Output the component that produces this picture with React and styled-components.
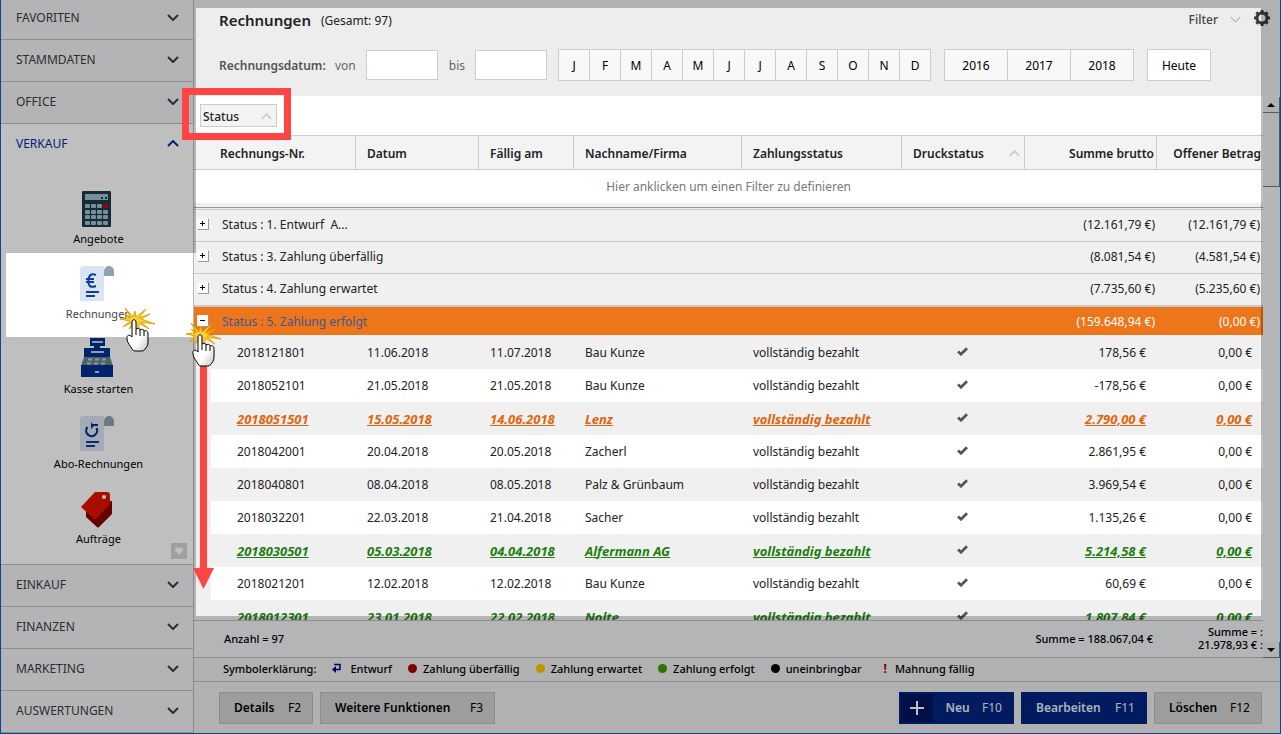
import React from "react";
import styled, { createGlobalStyle, css } from "styled-components";
import { FaHeart } from "react-icons/fa";

const GlobalStyle = createGlobalStyle`
  * {
    box-sizing: border-box;
  }
  body {
    margin: 0;
    overflow: hidden;
    font-family: "Noto Sans", "Open Sans", sans-serif;
    font-size: 12px;
    color: #222;
  }
  button, input {
    font: inherit;
    color: inherit;
  }
`;

const Window = styled.div`
  position: relative;
  display: flex;
  height: 100vh;
  overflow: hidden;
  border: 1px solid #0846a0;
  border-top: 0;
  background: #ececec;
`;

/* ---------- sidebar ---------- */

const Sidebar = styled.nav`
  display: flex;
  flex-direction: column;
  flex: 0 0 193px;
  margin-top: -2px;
  border-right: 1px solid #b8b8b8;
  background: #f0f1f3;
`;

const SectionButton = styled.button`
  display: flex;
  align-items: center;
  justify-content: space-between;
  flex: 0 0 42px;
  height: 42px;
  padding: 0 14px 2px 15px;
  border: 0;
  border-bottom: 1px solid ${(props) => (props.$open ? "transparent" : "#bcbcbc")};
  background: none;
  color: ${(props) => (props.$open ? "#002d9c" : "#3c3c3c")};
`;

const OpenSection = styled.section`
  position: relative;
  display: flex;
  flex-direction: column;
  flex: 1;
  background: #fff;
  border-bottom: 1px solid #bcbcbc;
`;

const ItemList = styled.div`
  padding-top: 12px;
`;

const Item = styled.a`
  display: flex;
  flex-direction: column;
  align-items: center;
  height: 75px;
  padding: 12px 0 0 3px;
  font-size: 11px;
  line-height: 22px;
  color: ${(props) => (props.$active ? "#444" : "#000")};
  text-decoration: none;
  svg {
    flex: none;
    margin-right: 4px;
    overflow: visible;
  }
`;

const FavButton = styled.button`
  position: absolute;
  right: 6px;
  bottom: 5px;
  display: flex;
  align-items: center;
  justify-content: center;
  width: 16px;
  height: 16px;
  padding: 0;
  border: 0;
  background: #d6d6d6;
  color: #fff;
  font-size: 8px;
`;

/* ---------- header ---------- */

const Main = styled.main`
  display: flex;
  flex-direction: column;
  flex: 1;
  min-width: 0;
`;

const Header = styled.header`
  flex: 0 0 96px;
  padding: 0 10px 0 25px;
  background: #ededed;
`;

const TitleRow = styled.div`
  display: flex;
  align-items: center;
  gap: 10px;
  height: 40px;
`;

const Title = styled.h1`
  margin: 0;
  font-size: 15px;
  font-weight: 600;
`;

const FilterButton = styled.button`
  display: flex;
  align-items: center;
  gap: 12px;
  margin-left: auto;
  padding: 0 0 2px;
  border: 0;
  background: none;
  color: #444;
  font-weight: 500;
`;

const GearButton = styled.button`
  display: flex;
  padding: 0;
  margin: 0 0 4px 3px;
  border: 0;
  background: none;
`;

const DateRow = styled.div`
  display: flex;
  align-items: center;
  height: 50px;
  color: #666;
`;

const DateTitle = styled.span`
  width: 116px;
  font-weight: 600;
  color: #555;
`;

const DateField = styled.label`
  display: flex;
  align-items: center;
  gap: 10px;
  margin-right: 11px;
`;

const DateInput = styled.input`
  width: 72px;
  height: 30px;
  border: 1px solid #ccc;
  background: #fff;
`;

const ButtonGroup = styled.div`
  display: flex;
  margin-right: 13px;
  border: 1px solid #ccc;
  background: #f8f8f8;
`;

const PeriodButton = styled.button`
  width: ${(props) => props.$width}px;
  height: 30px;
  padding: 0;
  border: 0;
  background: ${(props) => (props.$white ? "#fff" : "none")};
  color: #000;
  & + & {
    border-left: 1px solid #ccc;
  }
`;

/* ---------- grid ---------- */

const GridArea = styled.div`
  display: flex;
  flex: 1;
  min-height: 0;
`;

const GridColumn = styled.div`
  display: flex;
  flex-direction: column;
  flex: 1;
  min-width: 0;
`;

const GroupPanel = styled.div`
  flex: 0 0 39px;
  padding: 8px 0 0 6px;
  background: #fff;
`;

const GroupChip = styled.button`
  display: flex;
  align-items: center;
  justify-content: space-between;
  width: 77px;
  height: 23px;
  padding: 2px 4px 0 2px;
  border: 1px solid #ccc;
  background: #f3f3f3;
  font-weight: 500;
`;

const TableWrap = styled.div`
  flex: 1;
  min-height: 0;
  overflow: hidden;
  background: #f0f0f0;
`;

const Table = styled.table`
  width: 100%;
  table-layout: fixed;
  border-collapse: separate;
  border-spacing: 0;
  white-space: nowrap;
`;

const Th = styled.th`
  height: 35px;
  padding: 2px ${(props) => (props.$right ? 2 : 4)}px 0 ${(props) => (props.$first ? 26 : 11)}px;
  border: 1px solid #ccc;
  border-left: 0;
  background: #f3f3f3;
  font-weight: 600;
  text-align: ${(props) => (props.$right ? "right" : "left")};
  &:last-child {
    border-right: 0;
  }
`;

const ThInner = styled.span`
  display: flex;
  align-items: center;
  justify-content: space-between;
`;

const FilterCell = styled.td`
  height: 33px;
  padding: 0;
  background: #fff;
  color: #777;
  text-align: center;
`;

const DividerCell = styled.td`
  height: 7px;
  padding: 0;
  border-bottom: 1px solid #c8c8c8;
  background: linear-gradient(#eee 4px, #999 4px, #999 5px, #f0f0f0 5px);
`;

const GroupRow = styled.tr`
  td {
    height: 32px;
    padding: 0 3px 2px 0;
    border-bottom: 1px solid #c8c8c8;
    background: #f0f0f0;
    text-align: right;
  }
  td:first-child {
    padding-left: 3px;
    text-align: left;
  }
  td:nth-child(2) {
    padding-right: 2px;
  }
  ${(props) =>
    props.$open &&
    css`
      color: #fff;
      td {
        height: 30px;
        padding-bottom: 0;
        border-top: 1px solid #c8c8c8;
        border-bottom-color: #f0f0f0;
        background: #ed751a;
      }
      td:first-child {
        color: #40599c;
      }
    `}
`;

const GroupLabel = styled.span`
  display: flex;
  align-items: center;
  gap: 14px;
  white-space: pre;
`;

const Toggle = styled.button`
  display: flex;
  align-items: center;
  justify-content: center;
  width: 11px;
  height: 11px;
  padding: 0;
  margin-bottom: 2px;
  border: 0;
  background: #fafafa;
  box-shadow: 1px 1px 0 #999;
  svg {
    display: block;
  }
`;

const rowColors = { overdue: "#e0650f", done: "#1f7d12" };

const DataRow = styled.tr`
  td {
    height: 33px;
    padding: 0 11px;
    background: ${(props) => (props.$even ? "#fff" : "#f0f0f0")};
    text-align: left;
    ${(props) =>
      props.$tone &&
      css`
        color: ${rowColors[props.$tone]};
        font-size: 13px;
        line-height: 16px;
        font-weight: 700;
        font-style: italic;
        text-decoration: underline;
      `}
  }
  td:first-child {
    padding-left: 43px;
    background: linear-gradient(90deg, #f0f0f0 17px, ${(props) => (props.$even ? "#fff" : "#f0f0f0")} 17px);
  }
  td:nth-child(6) {
    padding: 0 2px 2px 0;
    text-align: center;
  }
  td:nth-child(n + 7) {
    text-align: right;
  }
  svg {
    display: block;
    margin: 0 auto;
  }
`;

const Summary = styled.div`
  display: flex;
  align-items: center;
  flex: 0 0 38px;
  padding: 0 0 2px 30px;
  border-top: 1px solid #bcbcbc;
  border-bottom: 1px solid #bcbcbc;
  background: #f1f2f5;
  font-size: 11px;
  font-weight: 500;
  line-height: 13px;
  color: #000;
  white-space: nowrap;
`;

const SummaryTotal = styled.span`
  margin-left: auto;
`;

const SummaryOpen = styled.span`
  width: 110px;
  text-align: right;
`;

const Scrollbar = styled.div`
  display: flex;
  flex-direction: column;
  flex: 0 0 17px;
  padding-top: 1px;
  background: repeating-conic-gradient(#e8e8e8 0 25%, #fff 0 50%) 0 0 / 2px 2px;
`;

const ScrollButton = styled.button`
  display: flex;
  align-items: center;
  justify-content: center;
  flex: 0 0 16px;
  padding: 0;
  border: 0;
  border-right: 1px solid #777;
  border-bottom: 1px solid #777;
  background: #ececec;
  &:last-child {
    margin-top: auto;
  }
`;

const ScrollThumb = styled.div`
  flex: 0 0 74px;
  border-right: 1px solid #777;
  border-bottom: 1px solid #777;
  background: #ececec;
`;

/* ---------- legend and actions ---------- */

const Legend = styled.div`
  display: flex;
  align-items: center;
  flex: 0 0 24px;
  gap: 16px;
  padding: 0 0 2px 29px;
  border-bottom: 1px solid #bcbcbc;
  font-size: 11px;
  font-weight: 500;
  color: #000;
  white-space: nowrap;
`;

const LegendItem = styled.span`
  display: flex;
  align-items: center;
  gap: ${(props) => props.$gap || 6}px;
`;

const Dot = styled.i`
  width: 9px;
  height: 9px;
  border-radius: 50%;
  background: ${(props) => props.$color};
`;

const Mark = styled.b`
  margin-left: 6px;
  color: #a80000;
  font-size: 12px;
`;

const Actions = styled.footer`
  display: flex;
  align-items: center;
  flex: 0 0 51px;
  gap: 7px;
  padding: 0 18px 0 25px;
`;

const Spacer = styled.div`
  flex: 1;
`;

const ActionButton = styled.button`
  display: flex;
  align-items: center;
  justify-content: space-between;
  width: ${(props) => props.$width}px;
  height: 32px;
  padding: 0 11px 0 14px;
  border: 1px solid ${(props) => (props.$primary ? "#00247f" : "#bdbdbd")};
  background: ${(props) => (props.$primary ? "#00247f" : "#d2d2d2")};
  color: ${(props) => (props.$primary ? "#e6eef8" : "#000")};
  white-space: nowrap;
  b {
    font-weight: 600;
  }
`;

const PlusBox = styled.span`
  display: flex;
  align-items: center;
  justify-content: center;
  width: 32px;
  height: 28px;
  margin-left: -13px;
  background: #00145f;
`;

/* ---------- tutorial layer ---------- */

// everything is darkened except the active menu item and the invoice list
const Shade = styled.div`
  position: absolute;
  inset: 0;
  background: rgba(0, 0, 0, 0.25);
  pointer-events: none;
  clip-path: polygon(
    evenodd,
    0 0, 100% 0, 100% 100%, 0 100%, 0 0,
    5px 253px, 195px 253px, 195px 8px,
    calc(100% - 19px) 8px, calc(100% - 19px) calc(100% - 117px),
    195px calc(100% - 117px), 195px 337px, 5px 337px, 5px 253px
  );
`;

const RedFrame = styled.div`
  position: absolute;
  left: 181px;
  top: 88px;
  width: 109px;
  height: 52px;
  border: 7px solid #ff4444;
  pointer-events: none;
`;

const Overlay = styled.svg`
  position: absolute;
  left: ${(props) => props.$x}px;
  top: ${(props) => props.$y}px;
  pointer-events: none;
`;

/* ---------- drawings ---------- */

const Chevron = ({ up, size = 11, color = "currentColor", width = 1 }) => (
  <svg width={size} height="7" viewBox="0 0 12 7" fill="none" stroke={color} strokeWidth={width}>
    <polyline points={up ? "1,6 6,1 11,6" : "1,1 6,6 11,1"} />
  </svg>
);

const Check = () => (
  <svg width="11" height="9" viewBox="0 0 11 9">
    <path d="M1 4.500L4 7.200 10 1.200" fill="none" stroke="#555" strokeWidth="2.800" />
  </svg>
);

const Calculator = () => (
  <svg width="38" height="38" viewBox="0 0 38 38">
    <rect x="4" y="1" width="29" height="36" rx="1" fill="#1c3a48" />
    <rect x="7" y="4" width="23" height="6" fill="#9cc0cf" />
    <path d="M23 8h2M27 8h2" stroke="#1c3a48" strokeWidth="2" />
    {[14, 20, 25, 31].map((y) =>
      [7, 13, 19, 25].map((x) => (
        <rect key={`${x}-${y}`} x={x} y={y} width="5" height="4" rx="1" fill={x === 25 && y === 14 ? "#d0000f" : "#9cc0cf"} />
      ))
    )}
  </svg>
);

const Paper = ({ children }) => (
  <svg width="38" height="38" viewBox="0 0 38 38">
    <path d="M26 11V6a5 5 0 0 1 10 0v5z" fill="#8da4ae" />
    <path d="M5 1h21v35H2V5q0-4 3-4z" fill="#dbe4f3" />
    <path d="M8 27h13M8 31h9" stroke="#0a3f9f" strokeWidth="2" />
    {children}
  </svg>
);

const Register = () => (
  <svg width="38" height="38" viewBox="0 4 38 38">
    <path d="M12 2h15v8h-5v3h-6v-3h-4z" fill="#00308c" />
    <path d="M14 5h11v2H14z" fill="#b8c6dc" />
    <path d="M6 12h26v9H6z" fill="#00308c" />
    <path d="M13 16h13" stroke="#c4d0e4" strokeWidth="2" />
    <path d="M6 21h26l3 9H3z" fill="#68808c" />
    <path d="M10 23.500h18M9 27.500h20" stroke="#c0ccd0" strokeWidth="2" strokeDasharray="4 3" />
    <path d="M3 29h32v12H3z" fill="#00308c" />
    <path d="M17 36h4" stroke="#c4d0e4" strokeWidth="2" />
  </svg>
);

const Tag = () => (
  <svg width="38" height="38" viewBox="0 0 38 38">
    <path d="M8 22l15-10 11-1v13L21 37q-1 1-2 0L8 27z" fill="#880000" />
    <path d="M17 2h12q3 0 3 3v9L18 29q-1 1-2 0L3 17z" fill="#e01200" />
    <circle cx="26" cy="7" r="2" fill="#fff" />
  </svg>
);

const Gear = () => (
  <svg width="16" height="16" viewBox="0 0 16 16">
    <circle cx="8" cy="8" r="5" fill="none" stroke="#3a3a3a" strokeWidth="3" />
    {[0, 45, 90, 135].map((deg) => (
      <path key={deg} d="M8 0v3M8 13v3" stroke="#3a3a3a" strokeWidth="3" transform={`rotate(${deg} 8 8)`} />
    ))}
  </svg>
);

const ReturnArrow = () => (
  <svg width="10" height="11" viewBox="0 0 10 11">
    <path d="M2 1.500h6v5H4" fill="none" stroke="#00007c" strokeWidth="1.500" />
    <path d="M0 6.500L4 3v7z" fill="#00007c" />
  </svg>
);

const ClickHand = ({ x, y }) => (
  <Overlay $x={x} $y={y} width="38" height="46" viewBox="0 0 38 46">
    <defs>
      <linearGradient id="palm" x1="0" y1="0" x2="1" y2="1">
        <stop offset="0.6" stopColor="#fff" />
        <stop offset="1" stopColor="#c4c4c4" />
      </linearGradient>
    </defs>
    <path
      d="M13 12L7 2l8 9 2-6 1 6 10-8-7 9 11-4-9 5 14 5-14-2 8 7-10-6 0 8-4-7-6 5 4-7-10 5 7-6-10-2 9-1-4-4z"
      fill="#fbd040"
      stroke="#e2a400"
      strokeWidth="1"
    />
    <path
      d="M14 30V16c0-3 4-3 4 0v7c1-1 4-1 4 1 1-1 4-1 4 1 2-1 4 0 4 3v8c0 4-2 6-3 7q-1 2-3 2h-7q-2 0-3-2c-1-3-5-6-5-10-1-4 3-5 5-2z"
      fill="url(#palm)"
      stroke="#000"
      strokeWidth="1"
    />
    <path d="M18 23v6M22 24v6M26 25v5" stroke="#000" fill="none" />
  </Overlay>
);

/* ---------- data ---------- */

const topSections = ["FAVORITEN", "STAMMDATEN", "OFFICE"];
const bottomSections = ["EINKAUF", "FINANZEN", "MARKETING", "AUSWERTUNGEN"];

const items = [
  { label: "Angebote", icon: <Calculator /> },
  {
    label: "Rechnungen",
    active: true,
    icon: (
      <Paper>
        <path d="M18 10q-7-3-7.500 5.500T18 21M8 14h8M8 17h8" fill="none" stroke="#0a3f9f" strokeWidth="2" />
      </Paper>
    ),
  },
  { label: "Kasse starten", icon: <Register /> },
  {
    label: "Abo-Rechnungen",
    icon: (
      <Paper>
        <path d="M9.500 12a5.500 5.500 0 1 0 9 1" fill="none" stroke="#0a2f8f" strokeWidth="2.200" />
        <path d="M13 14V7l1.500 2H20v2h-4z" fill="#0a2f8f" />
      </Paper>
    ),
  },
  { label: "Aufträge", icon: <Tag /> },
];

const months = ["J", "F", "M", "A", "M", "J", "J", "A", "S", "O", "N", "D"];

const groups = [
  ["Status : 1. Entwurf  A...", "(12.161,79 €)", "(12.161,79 €)"],
  ["Status : 3. Zahlung überfällig", "(8.081,54 €)", "(4.581,54 €)"],
  ["Status : 4. Zahlung erwartet", "(7.735,60 €)", "(5.235,60 €)"],
  ["Status : 5. Zahlung erfolgt", "(159.648,94 €)", "(0,00 €)"],
];

const invoices = [
  { nr: "2018121801", date: "11.06.2018", due: "11.07.2018", name: "Bau Kunze", sum: "178,56 €" },
  { nr: "2018052101", date: "21.05.2018", due: "21.05.2018", name: "Bau Kunze", sum: "-178,56 €" },
  { nr: "2018051501", date: "15.05.2018", due: "14.06.2018", name: "Lenz", sum: "2.790,00 €", tone: "overdue" },
  { nr: "2018042001", date: "20.04.2018", due: "20.05.2018", name: "Zacherl", sum: "2.861,95 €" },
  { nr: "2018040801", date: "08.04.2018", due: "08.05.2018", name: "Palz & Grünbaum", sum: "3.969,54 €" },
  { nr: "2018032201", date: "22.03.2018", due: "21.04.2018", name: "Sacher", sum: "1.135,26 €" },
  { nr: "2018030501", date: "05.03.2018", due: "04.04.2018", name: "Alfermann AG", sum: "5.214,58 €", tone: "done" },
  { nr: "2018021201", date: "12.02.2018", due: "12.02.2018", name: "Bau Kunze", sum: "60,69 €" },
  { nr: "2018012301", date: "23.01.2018", due: "22.02.2018", name: "Nolte", sum: "1.807,84 €", tone: "done" },
];

/* ---------- views ---------- */

const Section = ({ label, open }) => (
  <SectionButton $open={open} aria-expanded={!!open}>
    {label}
    <Chevron up={open} width={2} size={12} />
  </SectionButton>
);

const InvoiceTable = () => (
  <Table>
    <colgroup>
      <col width="162" />
      <col width="123" />
      <col width="95" />
      <col />
      <col width="160" />
      <col width="123" />
      <col width="132" />
      <col width="106" />
    </colgroup>
    <thead>
      <tr>
        <Th $first>Rechnungs-Nr.</Th>
        <Th>Datum</Th>
        <Th>Fällig am</Th>
        <Th>Nachname/Firma</Th>
        <Th>Zahlungsstatus</Th>
        <Th>
          <ThInner>
            Druckstatus
            <Chevron up color="#ccc" width={2} />
          </ThInner>
        </Th>
        <Th $right>Summe brutto</Th>
        <Th $right>Offener Betrag</Th>
      </tr>
    </thead>
    <tbody>
      <tr>
        <FilterCell colSpan={8}>Hier anklicken um einen Filter zu definieren</FilterCell>
      </tr>
      <tr>
        <DividerCell colSpan={8} />
      </tr>
      {groups.map(([label, sum, rest], i) => {
        const open = i === 3;
        return (
          <GroupRow key={label} $open={open}>
            <td colSpan={6}>
              <GroupLabel>
                <Toggle aria-label={label}>
                  <svg width="7" height="7">
                    <path d={open ? "M1 3.500h5" : "M1 3.500h5M3.500 1v5"} stroke="#000" />
                  </svg>
                </Toggle>
                {label}
              </GroupLabel>
            </td>
            <td>{sum}</td>
            <td>{rest}</td>
          </GroupRow>
        );
      })}
      {invoices.map((row, i) => (
        <DataRow key={row.nr} $even={i % 2 === 1} $tone={row.tone}>
          <td>{row.nr}</td>
          <td>{row.date}</td>
          <td>{row.due}</td>
          <td>{row.name}</td>
          <td>vollständig bezahlt</td>
          <td>
            <Check />
          </td>
          <td>{row.sum}</td>
          <td>0,00 €</td>
        </DataRow>
      ))}
    </tbody>
  </Table>
);

const App = () => (
  <>
    <GlobalStyle />
    <Window>
      <Sidebar>
        {topSections.map((label) => (
          <Section key={label} label={label} />
        ))}
        <OpenSection>
          <Section label="VERKAUF" open />
          <ItemList>
            {items.map(({ label, icon, active }) => (
              <Item key={label} href="#" $active={active}>
                {icon}
                {label}
              </Item>
            ))}
          </ItemList>
          <FavButton aria-label="Favorit">
            <FaHeart />
          </FavButton>
        </OpenSection>
        {bottomSections.map((label) => (
          <Section key={label} label={label} />
        ))}
      </Sidebar>

      <Main>
        <Header>
          <TitleRow>
            <Title>Rechnungen</Title>
            <span>(Gesamt: 97)</span>
            <FilterButton>
              Filter
              <Chevron color="#888" />
            </FilterButton>
            <GearButton aria-label="Einstellungen">
              <Gear />
            </GearButton>
          </TitleRow>
          <DateRow>
            <DateTitle>Rechnungsdatum:</DateTitle>
            <DateField>
              von
              <DateInput />
            </DateField>
            <DateField>
              bis
              <DateInput />
            </DateField>
            <ButtonGroup>
              {months.map((month, i) => (
                <PeriodButton key={i} $width={i ? 31 : 30}>
                  {month}
                </PeriodButton>
              ))}
            </ButtonGroup>
            <ButtonGroup>
              <PeriodButton $width={62}>2016</PeriodButton>
              <PeriodButton $width={63}>2017</PeriodButton>
              <PeriodButton $width={63}>2018</PeriodButton>
            </ButtonGroup>
            <ButtonGroup>
              <PeriodButton $width={62} $white>
                Heute
              </PeriodButton>
            </ButtonGroup>
          </DateRow>
        </Header>

        <GridArea>
          <GridColumn>
            <GroupPanel>
              <GroupChip>
                Status
                <Chevron up color="#ccc" width={2} />
              </GroupChip>
            </GroupPanel>
            <TableWrap>
              <InvoiceTable />
            </TableWrap>
            <Summary>
              Anzahl = 97
              <SummaryTotal>Summe = 188.067,04 €</SummaryTotal>
              <SummaryOpen>
                Summe = :<br />
                21.978,93 € :
              </SummaryOpen>
            </Summary>
          </GridColumn>
          <Scrollbar>
            <ScrollButton aria-label="Nach oben">
              <svg width="8" height="4">
                <path d="M0 4l4-4 4 4z" />
              </svg>
            </ScrollButton>
            <ScrollThumb />
            <ScrollButton aria-label="Nach unten">
              <svg width="8" height="4">
                <path d="M0 0l4 4 4-4z" />
              </svg>
            </ScrollButton>
          </Scrollbar>
        </GridArea>

        <Legend>
          <span>Symbolerklärung:</span>
          <LegendItem $gap={8}>
            <ReturnArrow />
            Entwurf
          </LegendItem>
          <LegendItem>
            <Dot $color="#a80000" />
            Zahlung überfällig
          </LegendItem>
          <LegendItem>
            <Dot $color="#ffc400" />
            Zahlung erwartet
          </LegendItem>
          <LegendItem>
            <Dot $color="#3c9c00" />
            Zahlung erfolgt
          </LegendItem>
          <LegendItem>
            <Dot $color="#000" />
            uneinbringbar
          </LegendItem>
          <LegendItem $gap={8}>
            <Mark>!</Mark>
            Mahnung fällig
          </LegendItem>
        </Legend>

        <Actions>
          <ActionButton $width={94}>
            <b>Details</b> F2
          </ActionButton>
          <ActionButton $width={175}>
            <b>Weitere Funktionen</b> F3
          </ActionButton>
          <Spacer />
          <ActionButton $width={115} $primary>
            <PlusBox>
              <svg width="14" height="14">
                <path d="M7 0v14M0 7h14" stroke="#fff" strokeWidth="2" />
              </svg>
            </PlusBox>
            <b>Neu</b> F10
          </ActionButton>
          <ActionButton $width={126} $primary>
            <b>Bearbeiten</b> F11
          </ActionButton>
          <ActionButton $width={108}>
            <b>Löschen</b> F12
          </ActionButton>
        </Actions>
      </Main>

      <Shade />
      <RedFrame />
      <Overlay $x={192} $y={356} width="22" height="234" viewBox="0 0 22 234">
        <path d="M7 0h7v212h7L10.500 233 0 212h7z" fill="#ff4444" />
      </Overlay>
      <ClickHand x={117} y={306} />
      <ClickHand x={183} y={321} />
    </Window>
  </>
);

export default App;
